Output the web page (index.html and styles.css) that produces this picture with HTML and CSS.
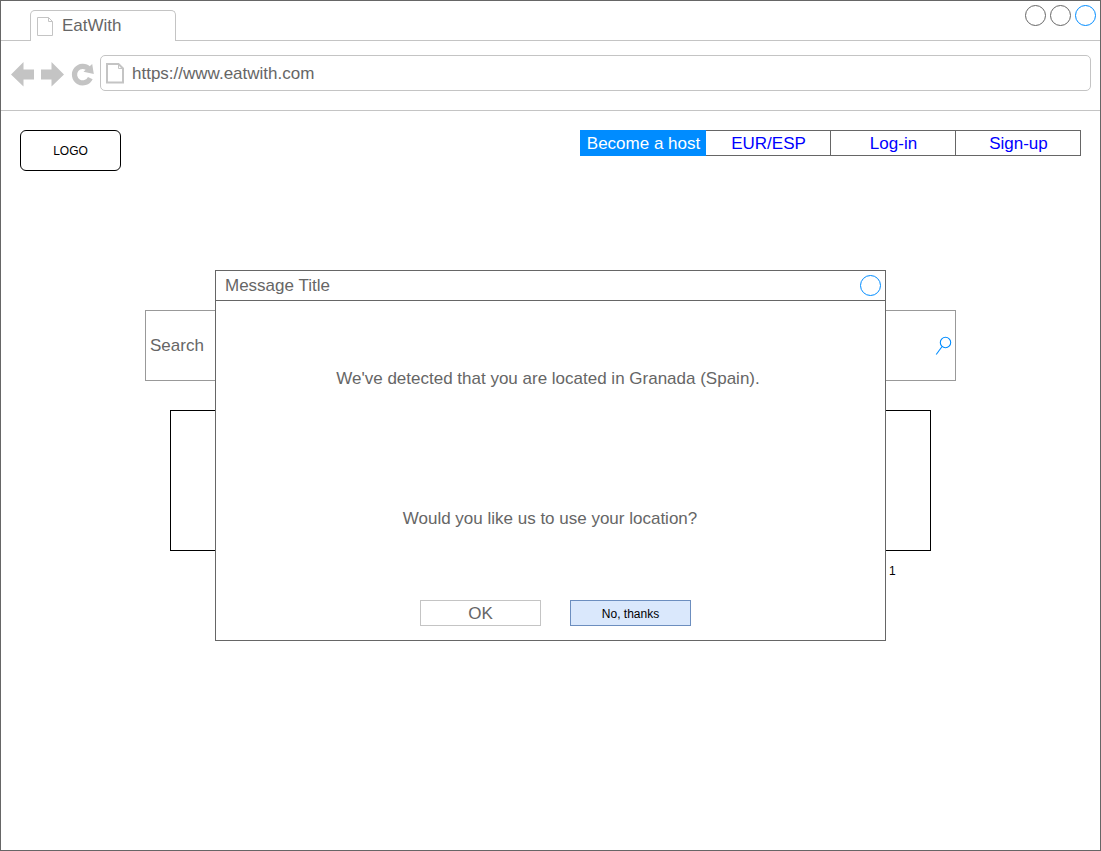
FILE: index.html
```html
<!DOCTYPE html>
<html lang="en">
<head>
<meta charset="utf-8">
<title>EatWith</title>
<link rel="stylesheet" href="styles.css">
</head>
<body>
<div class="window">
  <header class="tabstrip">
    <div class="tab">
      <svg class="tab-icon" width="17" height="20" viewBox="0 0 17 20"><path d="M.5 .5H11.500L15.500 4.500V18.500H.5ZM11.500 .5V4.500H15.500" fill="none" stroke="#c4c4c4"/></svg>
      <span>EatWith</span>
    </div>
    <div class="controls"><i class="dot"></i><i class="dot"></i><i class="dot dot-blue"></i></div>
  </header>
  <div class="toolbar">
    <svg class="nav-icons" width="84" height="26" viewBox="0 0 84 26">
      <g fill="#c4c4c4">
        <path d="M0 13.500L12.500 1V8.500H23V18.500H12.500V25.500Z"/>
        <path d="M53 13.500L40.500 1V8.500H30V18.500H40.500V25.500Z"/>
        <path d="M81.200 3L82.800 13L72.500 10.800Z"/>
      </g>
      <path d="M77.700 7.800A8.300 8.300 0 1 0 79.300 17.200" fill="none" stroke="#c4c4c4" stroke-width="5.200"/>
    </svg>
    <div class="address">
      <svg class="page-icon" width="18" height="21" viewBox="0 0 18 21"><path d="M1 1H12.500L17 5.500V19.500H1Z" fill="none" stroke="#c4c4c4" stroke-width="2"/><path d="M12.500 1V5.500H17" fill="none" stroke="#c4c4c4"/></svg>
      <span>https://www.eatwith.com</span>
    </div>
  </div>
  <main class="page">
    <div class="topbar">
      <div class="logo">LOGO</div>
      <nav class="menu">
        <a class="item item-active">Become a host</a>
        <a class="item">EUR/ESP</a>
        <a class="item">Log-in</a>
        <a class="item">Sign-up</a>
      </nav>
    </div>
    <div class="search">
      <span>Search</span>
      <svg width="17" height="20" viewBox="0 0 17 20"><g fill="none" stroke="#008cff" stroke-width="1.100"><circle cx="10.500" cy="6.500" r="5.200"/><path d="M7.100 10.500L1.200 18.500"/></g></svg>
    </div>
    <div class="panel"></div>
    <div class="pager">1</div>
    <section class="dialog">
      <div class="dialog-title"><span>Message Title</span><i class="dot dot-blue"></i></div>
      <div class="dialog-body">
        <p class="line line-first">We've detected that you are located in Granada (Spain).</p>
        <p class="line">Would you like us to use your location?</p>
        <div class="actions">
          <div class="btn">OK</div>
          <div class="btn btn-alt">No, thanks</div>
        </div>
      </div>
    </section>
  </main>
</div>
</body>
</html>
```
FILE: styles.css
```css
* { box-sizing: border-box; }
body {
  margin: 0;
  background: #fff;
  color: #666;
  font: 17px/20px "Liberation Sans", Arial, sans-serif;
}
svg { display: block; flex: none; }
.window {
  position: relative;
  width: 1101px;
  height: 851px;
  border: 1px solid #666;
  overflow: hidden;
}
.tabstrip {
  display: flex;
  justify-content: space-between;
  height: 40px;
  padding: 9px 4px 0 29px;
  border-bottom: 1px solid #c4c4c4;
}
.tab {
  display: flex;
  width: 146px;
  height: 31px;
  padding: 5px 0 0 6px;
  border: 1px solid #c4c4c4;
  border-bottom: 0;
  border-radius: 5px 5px 0 0;
  background: #fff;
}
.tab-icon { margin: 1px 8px 0 0; }
.controls { display: flex; gap: 4px; margin-top: -5px; }
.dot {
  width: 21px;
  height: 21px;
  border: 1px solid #666;
  border-radius: 50%;
}
.dot-blue { border-color: #008cff; }
.toolbar {
  display: flex;
  height: 70px;
  padding: 14px 9px 0 10px;
  border-bottom: 1px solid #c4c4c4;
}
.nav-icons { margin: 6px 5px 0 0; }
.address {
  display: flex;
  align-items: center;
  flex: 1;
  height: 36px;
  padding-left: 5px;
  border: 1px solid #c4c4c4;
  border-radius: 5px;
}
.address span { line-height: 18px; padding-top: 2px; }
.page-icon { margin-right: 8px; }
.page { padding: 19px; }
.topbar {
  display: flex;
  justify-content: space-between;
  align-items: flex-start;
}
.logo {
  width: 101px;
  height: 41px;
  border: 1px solid #000;
  border-radius: 6px;
  color: #000;
  font-size: 12px;
  line-height: 40px;
  text-align: center;
}
.menu {
  display: flex;
  width: 501px;
  height: 26px;
  border: 1px solid #666;
  border-left: 0;
  color: #00f;
  line-height: 25px;
  text-align: center;
}
.item {
  flex: none;
  width: 125px;
  height: 24px;
  padding-left: 1px;
}
.item + .item { border-right: 1px solid #666; }
.item:last-child { width: 124px; border-right: 0; }
.item-active {
  width: 126px;
  height: 26px;
  margin-top: -1px;
  background: #008cff;
  color: #fff;
  line-height: 27px;
}
.search {
  display: flex;
  justify-content: space-between;
  align-items: center;
  width: 811px;
  height: 71px;
  margin: 139px 0 0 125px;
  padding: 0 3px 0 4px;
  border: 1px solid #999;
}
.panel {
  width: 761px;
  height: 141px;
  margin: 29px 0 0 150px;
  border: 1px solid #000;
}
.pager {
  margin: 10px 0 0 869px;
  color: #000;
  font-size: 12px;
}
.dialog {
  position: absolute;
  left: 214px;
  top: 269px;
  width: 671px;
  height: 371px;
  border: 1px solid #666;
  background: #fff;
}
.dialog-title {
  display: flex;
  justify-content: space-between;
  align-items: center;
  height: 30px;
  padding: 0 4px 0 9px;
  border-bottom: 1px solid #666;
}
.dialog-body { padding-top: 68px; }
.line { margin: 0 0 71px; text-align: center; }
.line-first { margin: 0 5px 120px 0; }
.line + .line { padding-right: 1px; }
.actions { display: flex; gap: 29px; padding-left: 204px; }
.btn {
  width: 121px;
  height: 26px;
  border: 1px solid #c4c4c4;
  line-height: 25px;
  text-align: center;
}
.btn-alt {
  border-color: #6c8ebf;
  background: #dae8fc;
  color: #000;
  font-size: 12px;
  line-height: 26px;
}
```
